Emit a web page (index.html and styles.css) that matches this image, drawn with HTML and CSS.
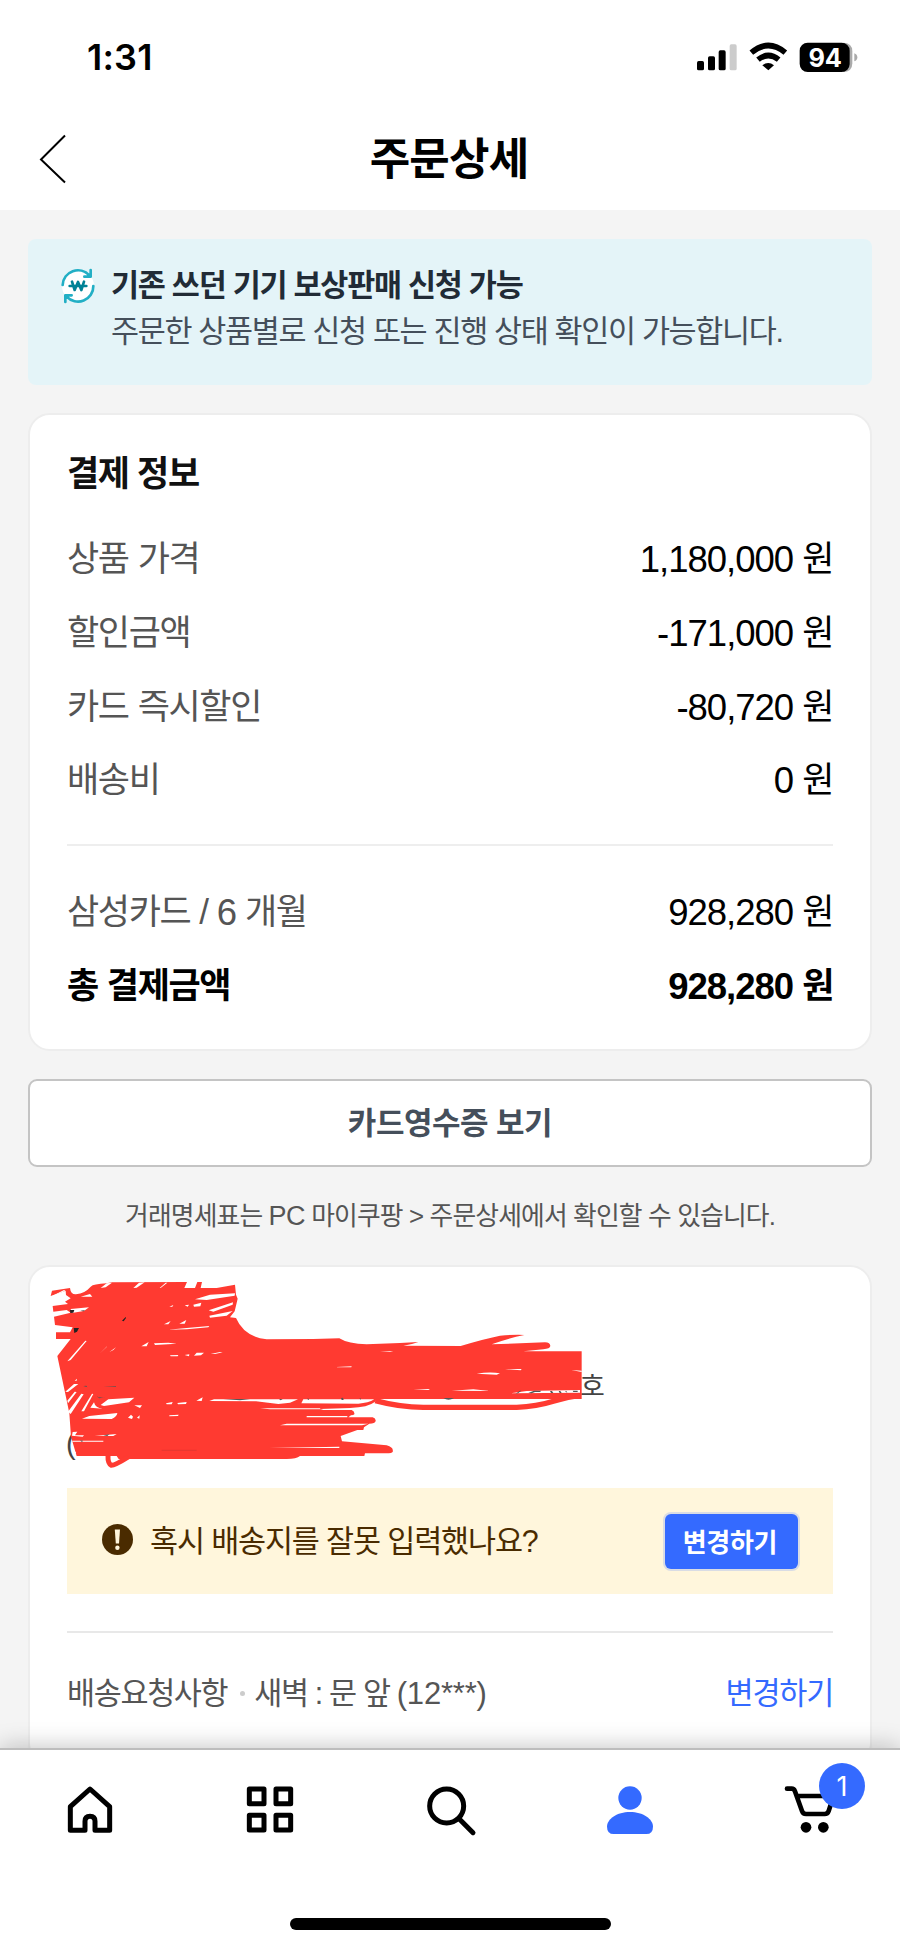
FILE: index.html
```html
<!DOCTYPE html>
<html lang="ko">
<head>
<meta charset="utf-8">
<title>주문상세</title>
<link rel="stylesheet" href="styles.css">
</head>
<body>
<div class="screen">
  <header class="top">
    <div class="status">
      <span class="time">1:31</span>
      <svg class="status-icons" viewBox="730 110 510 120">
        <rect x="742" y="182" width="21" height="28" rx="5"/>
        <rect x="775" y="168" width="21" height="42" rx="5"/>
        <rect x="807" y="150" width="21" height="60" rx="5"/>
        <rect x="840" y="132" width="21" height="78" rx="5" fill="#ccc"/>
        <path d="M905 157Q956 114 1007 157M925 178Q956 153 987 178" fill="none" stroke="#000" stroke-width="17"/>
        <path d="M938 195Q956 181 973 195L956 210Z"/>
        <path d="M1180 127q28 0 28 26v36q0 26-28 26z" fill="#aaa"/>
        <rect x="1050" y="127" width="150" height="88" rx="24"/>
        <path d="M1214 159q9 3 9 12t-9 12z" fill="#aaa"/>
        <text class="battery" x="1126" y="199" text-anchor="middle">94</text>
      </svg>
    </div>
    <div class="titlebar">
      <svg class="back" viewBox="0 0 28 50"><path d="M26 1.5L2 25.500 26 48.500" fill="none" stroke="#000" stroke-width="2"/></svg>
      <h1 class="title">주문상세</h1>
    </div>
  </header>

  <main class="content">
    <section class="notice">
      <svg class="trade" viewBox="0 0 108 108">
        <circle cx="54" cy="54" r="48" fill="#fff"/>
        <g fill="none" stroke="#22afc5" stroke-width="8" stroke-linecap="round" stroke-linejoin="round">
          <path d="M8 51A46 46 0 0 1 88 22M92 6V26H73M100 54A46 46 0 0 1 20 86M16 102V82H35"/>
        </g>
        <path d="M36 41L44 66 54 42 64 66 72 41M29 54H79" fill="none" stroke="#008296" stroke-width="8" stroke-linecap="round" stroke-linejoin="round"/>
      </svg>
      <div class="notice-text">
        <strong class="notice-title">기존 쓰던 기기 보상판매 신청 가능</strong>
        <span class="notice-desc">주문한 상품별로 신청 또는 진행 상태 확인이 가능합니다.</span>
      </div>
    </section>

    <section class="card">
      <h2 class="card-title">결제 정보</h2>
      <div class="rows">
        <div class="row"><span class="label">상품 가격</span><span><span class="num">1,180,000</span> 원</span></div>
        <div class="row"><span class="label">할인금액</span><span><span class="num">-171,000</span> 원</span></div>
        <div class="row"><span class="label">카드 즉시할인</span><span><span class="num">-80,720</span> 원</span></div>
        <div class="row"><span class="label">배송비</span><span><span class="num">0</span> 원</span></div>
      </div>
      <div class="rows rows-total">
        <div class="row"><span class="label">삼성카드 / <span class="num">6</span> 개월</span><span><span class="num">928,280</span> 원</span></div>
        <div class="row total"><span>총 결제금액</span><span><span class="num">928,280</span> 원</span></div>
      </div>
    </section>

    <button class="receipt">카드영수증 보기</button>
    <p class="hint">거래명세표는 <span class="latin">PC</span> 마이쿠팡 &gt; 주문상세에서 확인할 수 있습니다.</p>

    <section class="card delivery">
      <div class="address">
        <span class="unit">호</span>
        <span class="phone">(</span>
        <svg class="scribble" viewBox="0 0 1800 630">
          <path fill="#ff3a31" d="M32 78L36 62 90 54Q92 74 108 73 135 70 152 50 160 42 200 40L216 37 441 36 433 54H465L472 36H486L482 54H530L585 44 588 74 593 86 584 124 570 142 588 144Q612 200 680 208L820 207 898 205Q925 222 980 223L1080 219 1135 216Q1115 224 1090 227L1262 228Q1330 207 1380 197 1430 193 1453 195 1400 206 1355 223L1515 217Q1531 218 1531 228 1530 236 1510 238L1450 244H1625V387H1012L1004 396Q985 412 930 414L840 417 850 420H935Q945 424 943 433 941 436 933 436L925 442H998Q1008 445 1007 453 1005 461 988 461L972 472 970 480H952L902 498 906 514 1040 526Q1062 532 1058 546 1054 550 1046 550H975L973 558H780Q770 567 740 567H236L230 558H110L93 500 88 430 76 372 52 258 92 207H48V187H90L98 172 45 165 42 140 92 128 80 120 40 125 38 108 84 102 75 95 92 85 78 75 77 62Z"/>
          <path d="M1006 392Q1080 412 1150 412H1430Q1490 410 1540 394T1618 378" fill="none" stroke="#ff3a31" stroke-width="16"/>
          <path d="M204 557Q203 580 214 586 225 586 265 561" fill="none" stroke="#ff3a31" stroke-width="15"/>
          <g fill="#fff">
            <path d="M200 40L216 38 197 52 182 54ZM297 38L314 37 290 53 280 54ZM377 38L382 38 362 54 359 54Z"/>
            <path d="M76 62L40 78 32 80 72 60ZM122 80L150 72 157 80ZM92 117L147 112 132 123 95 129Z"/>
            <path d="M465 88L510 74 585 70 584 77 500 90ZM506 121L579 97 578 104 520 125ZM508 137L578 123 560 137 510 143Z"/>
            <path d="M372 163L392 153 385 163ZM418 161L439 150 434 161ZM384 179L440 174 508 168 505 172 440 178ZM460 104L484 98 481 109 462 110ZM434 106L447 104 443 110ZM388 110L400 105 397 110Z"/>
            <path d="M82 274L136 212 140 213 92 270ZM180 250L202 228 200 231ZM208 246L228 232 220 240ZM304 229L326 216 320 229ZM342 220L385 218 410 221 345 225Z"/>
            <path d="M390 256L415 255 413 259H392ZM434 255L448 253 447 259ZM462 257L470 248 492 248 483 256ZM512 252L540 246 548 247 525 252Z"/>
            <path d="M76 365L102 342 115 342 84 366ZM82 392L104 365 110 366 84 400ZM84 425L124 371 131 373 92 432ZM124 424L156 371 160 372 132 424ZM151 413L162 397Q166 415 188 416ZM182 405L205 388 283 383 267 397 192 408Z"/>
            <path d="M126 446L148 438 232 429Q231 440 215 447ZM264 443L273 434 279 440 276 447ZM291 443L299 436 298 446ZM283 406H306L300 414ZM388 436L416 434 414 438 388 439ZM378 400L398 396 395 403H380ZM412 399L440 396 438 402 414 403Z"/>
            <path d="M469 392L488 382 485 393ZM508 393L522 388H774L750 398 715 402 648 394ZM784 400L790 388H1003Q985 399 955 401ZM660 415H840L842 418H690ZM800 438H922V442H800ZM720 466L740 461H985L966 466ZM688 534L898 530V534Z"/>
            <path d="M98 486L112 485 105 496H132L128 500 96 497ZM164 498L230 492 220 498ZM97 512H190V515H97ZM98 548L108 545 107 550ZM104 332L111 326 110 332ZM1310 311Q1350 305 1380 310L1370 314ZM1395 297H1445L1442 301ZM1594 300L1625 302V306ZM890 291L935 289 934 292H892ZM1120 360L1165 357 1170 360ZM1235 362L1300 358 1350 363ZM1412 370L1460 363 1620 360V368ZM1020 246L1060 243 1050 246Z"/>
          </g>
          <g fill="#222">
            <path d="M90 120L103 120 100 128 91 129ZM101 174H117L111 185 103 189ZM121 122L136 121 130 124ZM246 152L257 141 258 144 251 154Z"/>
            <path fill="#555" d="M130 348L139 347 142 352ZM170 379Q180 385 200 381L178 385ZM190 350L228 348 228 350ZM120 511L129 512 126 516ZM190 496L208 493 202 498ZM550 387H630L600 391ZM717 387H728L722 391ZM800 386H807V390ZM903 384L909 383 911 390H905ZM958 385L962 385 963 390ZM1210 384H1242Q1225 395 1210 384ZM1427 371L1440 362H1444L1434 370ZM1465 369L1482 362H1504L1500 366H1485L1475 370ZM1530 363H1536L1540 369H1533ZM1556 363H1561L1565 369H1559ZM1574 364H1580L1582 368ZM1598 362H1613V366H1600Z"/>
            <path d="M365 541H470" stroke="#a33" stroke-width="1"/>
          </g>
        </svg>
      </div>
      <div class="warning">
        <svg class="alert" viewBox="0 0 31 31"><circle cx="15.500" cy="15.500" r="15.500" fill="#4a2b00"/><path d="M12.800 5.500h5.200l-1 14h-3.200z" fill="#fff6dc"/><circle cx="15.400" cy="23.800" r="2.200" fill="#fff6dc"/></svg>
        <span class="warning-text">혹시 배송지를 잘못 입력했나요?</span>
        <button class="change">변경하기</button>
      </div>
      <div class="request">
        <span>배송요청사항<i class="dot"></i>새벽 : 문 앞 <span class="code">(12***)</span></span>
        <a class="link">변경하기</a>
      </div>
    </section>
  </main>

  <nav class="tabs">
    <div class="tab-row">
      <div class="tab"><svg class="tab-icon" viewBox="180 960 180 180"><path d="M270 987L211 1040V1111H255V1084Q255 1069 270 1069T285 1084V1111H329V1040Z" fill="none" stroke="#000" stroke-width="15" stroke-linejoin="round"/></svg></div>
      <div class="tab"><svg class="tab-icon" viewBox="720 960 180 180"><path d="M748 987H792V1031H748ZM828 987H872V1031H828ZM748 1066H792V1110H748ZM828 1066H872V1110H828Z" fill="none" stroke="#000" stroke-width="15" stroke-linejoin="round"/></svg></div>
      <div class="tab"><svg class="tab-icon" viewBox="1260 960 180 180"><g fill="none" stroke="#000" stroke-width="15" stroke-linecap="round"><circle cx="1340" cy="1038" r="51"/><path d="M1378 1077L1419 1118"/></g></svg></div>
      <div class="tab"><svg class="tab-icon" viewBox="450 960 180 180"><g fill="#346aff"><circle cx="540" cy="1014" r="35"/><path d="M471 1100C471 1077 501 1056 540 1056S609 1077 609 1100Q609 1122 589 1122H491Q471 1122 471 1100Z"/></g></svg></div>
      <div class="tab">
        <div class="cart">
          <svg class="tab-icon" viewBox="990 960 180 180"><path d="M1011 986H1025Q1032 986 1035 994L1056 1053Q1059 1062 1068 1062H1124Q1133 1062 1136 1053L1146 1022M1042 1008H1150" fill="none" stroke="#000" stroke-width="14" stroke-linecap="round" stroke-linejoin="round"/><circle cx="1068" cy="1102" r="16"/><circle cx="1120" cy="1102" r="16"/></svg>
          <span class="badge">1</span>
        </div>
      </div>
    </div>
    <div class="home-bar"></div>
  </nav>
</div>
</body>
</html>
```

FILE: styles.css
```css
* { box-sizing: border-box; }
body { margin: 0; background: #f4f4f4; }
.screen {
  display: flex;
  flex-direction: column;
  width: 900px;
  height: 1948px;
  overflow: hidden;
  background: #f4f4f4;
  color: #000;
  font-family: "Liberation Sans", "Noto Sans CJK KR", sans-serif;
}
button { font-family: inherit; margin: 0; padding: 0; }

.top { height: 210px; background: #fff; flex: none; }
.status {
  display: flex;
  justify-content: space-between;
  align-items: center;
  height: 114px;
  padding: 0 37px 0 87px;
}
.time { font: 600 36px/40px Inter, sans-serif; letter-spacing: 0.2px; }
.status-icons { width: 170px; height: 40px; }
.battery { font: 700 76px Inter, sans-serif; fill: #fff; letter-spacing: -1px; }
.titlebar {
  display: grid;
  grid-template-columns: 28px 1fr 28px;
  align-items: center;
  height: 90px;
  padding: 0 41px 0 39px;
}
.back { width: 28px; height: 50px; }
.title { margin: 2px 0 0; text-align: center; font-size: 44px; letter-spacing: -0.8px; line-height: 60px; font-weight: 700; }

.content {
  flex: 1;
  min-height: 0;
  overflow: hidden;
  padding: 29px 28px 0;
}
.notice {
  display: flex;
  height: 146px;
  padding: 29px 32px 27px;
  border-radius: 8px;
  background: #e4f4f8;
}
.trade { width: 36px; height: 36px; flex: none; }
.notice-text { display: flex; flex-direction: column; margin: -2px 0 0 15px; font-size: 30.500px; letter-spacing: -1.340px; white-space: nowrap; }
.notice-title { line-height: 38px; letter-spacing: -1.250px; color: #212b36; }
.notice-desc { line-height: 54px; color: #454f5b; }

.card {
  height: 638px;
  margin-top: 28px;
  padding: 32px 37px 0;
  border: 2px solid #ededed;
  border-radius: 22px;
  background: #fff;
}
.card-title { margin: 0; font-size: 35px; letter-spacing: -1.350px; line-height: 53px; color: #111; }
.rows { padding-top: 22px; font-size: 35px; letter-spacing: -1.350px; word-spacing: 0.600px; }
.rows-total { margin-top: 27px; padding-top: 29px; border-top: 2px solid #eee; }
.row { display: flex; justify-content: space-between; height: 73.800px; line-height: 74px; white-space: nowrap; }
.label { color: #555; }
.total { font-weight: 700; }
.num { font-size: 36.500px; letter-spacing: -1px; vertical-align: -1px; line-height: 1; }

.receipt {
  display: block;
  width: 100%;
  height: 88px;
  margin-top: 28px;
  padding-bottom: 6px;
  border: 2px solid #c4c4c4;
  border-radius: 9px;
  background: #fff;
  color: #454f5b;
  font-size: 31px;
  letter-spacing: -0.500px;
  font-weight: 700;
}
.hint { margin: 28px 0 0; text-align: center; font-size: 25.800px; letter-spacing: -0.860px; line-height: 42px; color: #555; white-space: nowrap; }
.latin { font-size: 27px; letter-spacing: -0.600px; }

.delivery { height: 500px; padding-top: 0; }
.address { position: relative; height: 221px; }
.unit { position: absolute; left: 513px; top: 100px; font-size: 27px; line-height: 40px; color: #444; }
.phone { position: absolute; left: -1px; top: 159px; font-size: 29px; line-height: 36px; color: #444; }
.scribble { position: absolute; left: -27px; top: 3px; width: 600px; height: 210px; }
.warning {
  display: flex;
  align-items: center;
  height: 106px;
  padding: 0 35px;
  background: #fff6dc;
}
.alert { width: 31px; height: 31px; margin-top: -4px; }
.warning-text { margin: -4px 0 0 17px; font-size: 30.500px; letter-spacing: -1.150px; color: #4a2b00; white-space: nowrap; }
.change {
  width: 133px;
  height: 55px;
  margin-left: auto;
  padding: 0 3px 2px 0;
  border: 0;
  border-radius: 6px;
  box-shadow: 0 0 0 2px #d9dce4;
  background: #346aff;
  color: #fff;
  font-size: 26px;
  letter-spacing: -0.300px;
  font-weight: 700;
}
.request {
  display: flex;
  justify-content: space-between;
  margin-top: 37px;
  padding-top: 35px;
  border-top: 2px solid #e8e8e8;
  font-size: 30.500px;
  letter-spacing: -1.350px;
  line-height: 50px;
  color: #555;
  white-space: nowrap;
}
.dot { display: inline-block; width: 5px; height: 5px; margin: 0 9px 0 13px; border-radius: 50%; background: #ccc; vertical-align: 8px; }
.code { font-size: 31px; letter-spacing: -0.200px; }
.link { color: #346aff; letter-spacing: -1.200px; }

.tabs {
  position: relative;
  flex: none;
  height: 200px;
  border-top: 2px solid #bdbdbd;
  box-shadow: 0 -2px 22px rgba(0, 0, 0, 0.22);
  background: #fff;
}
.tab-row { display: grid; grid-template-columns: repeat(5, 1fr); padding-top: 30px; }
.tab { display: flex; justify-content: center; }
.tab-icon { display: block; width: 60px; height: 60px; }
.cart { position: relative; }
.badge {
  position: absolute;
  left: 39px;
  top: -17px;
  width: 46px;
  height: 46px;
  border-radius: 50%;
  background: #346aff;
  color: #fff;
  text-align: center;
  font: 400 27px/47px Inter, sans-serif;
}
.home-bar { width: 321px; height: 12px; margin: 78px 0 0 290px; border-radius: 6px; background: #000; }
```
